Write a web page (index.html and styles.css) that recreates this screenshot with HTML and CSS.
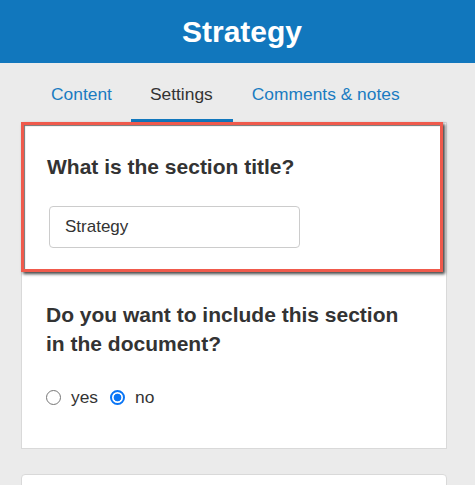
FILE: index.html
```html
<!DOCTYPE html>
<html lang="en">
<head>
<meta charset="utf-8">
<title>Strategy</title>
<link rel="stylesheet" href="styles.css">
</head>
<body>
<header class="topbar">
  <h1 class="topbar-title">Strategy</h1>
</header>
<nav class="tabs">
  <a class="tab" href="#">Content</a>
  <a class="tab tab-active" href="#">Settings</a>
  <a class="tab" href="#">Comments &amp; notes</a>
</nav>
<main class="page">
  <section class="card">
    <div class="field field-highlight">
      <h2 class="question">What is the section title?</h2>
      <input class="text-input" type="text" value="Strategy">
    </div>
    <div class="field field-plain">
      <h2 class="question">Do you want to include this section<br>in the document?</h2>
      <div class="radios">
        <label class="radio-label"><input class="radio" type="radio" name="include"><span>yes</span></label>
        <label class="radio-label"><input class="radio" type="radio" name="include" checked><span>no</span></label>
      </div>
    </div>
  </section>
  <section class="card card-next"></section>
</main>
</body>
</html>
```

FILE: styles.css
```css
html, body {
  margin: 0;
  padding: 0;
  overflow: hidden;
}
body {
  background: #ebebeb;
  font-family: "Liberation Sans", Arial, sans-serif;
  color: #333333;
}
.topbar {
  background: #1177bd;
  height: 63px;
  padding-left: 9px;
}
.topbar-title {
  margin: 0;
  text-align: center;
  color: #ffffff;
  font-size: 30px;
  font-weight: 700;
  line-height: 63px;
}
.tabs {
  display: flex;
  padding-left: 32px;
}
.tab {
  display: block;
  padding: 21px 19px 15px 19px;
  font-size: 17.4px;
  line-height: 20px;
  color: #1a7bc1;
  text-decoration: none;
  border-bottom: 3px solid transparent;
}
.tab-active {
  color: #333333;
  border-bottom-color: #1177bd;
  padding-right: 20px;
}
.page {
  padding: 0 28px 0 21px;
}
.card {
  background: #ffffff;
  border: 1px solid #d9d9d9;
}
.field-highlight {
  margin: -1px 3px 0 -1px;
  border: 3px solid #f05a4c;
  padding: 27px 23px 21px;
  box-shadow: 2px 2px 3px rgba(0, 0, 0, 0.75), inset 1px 1px 1px rgba(0, 0, 0, 0.55);
  position: relative;
}
.field-plain {
  padding: 28px 24px 41px;
}
.question {
  margin: 0;
  font-size: 21px;
  line-height: 29px;
  font-weight: 700;
  color: #333333;
}
.text-input {
  display: block;
  box-sizing: border-box;
  margin: 25px 0 0 2px;
  width: 251px;
  height: 42px;
  padding: 0 15px;
  border: 1px solid #cccccc;
  border-radius: 4px;
  font-family: "Liberation Sans", Arial, sans-serif;
  font-size: 17px;
  color: #333333;
  background: #ffffff;
  outline: none;
}
.radios {
  display: flex;
  align-items: center;
  margin-top: 29px;
  gap: 12px;
}
.radio-label {
  display: flex;
  align-items: center;
  gap: 10px;
  font-size: 17.4px;
  line-height: 20px;
  color: #333333;
}
.radio {
  appearance: none;
  -webkit-appearance: none;
  margin: 0;
  width: 15px;
  height: 15px;
  box-sizing: border-box;
  border: 1px solid #767676;
  border-radius: 50%;
  background: #ffffff;
}
.radio:checked {
  border: 2px solid #0a75f5;
  background: radial-gradient(circle, #0a75f5 0 3.5px, #ffffff 4.2px);
}
.card-next {
  margin-top: 25px;
  height: 40px;
  border-radius: 4px;
}
```
